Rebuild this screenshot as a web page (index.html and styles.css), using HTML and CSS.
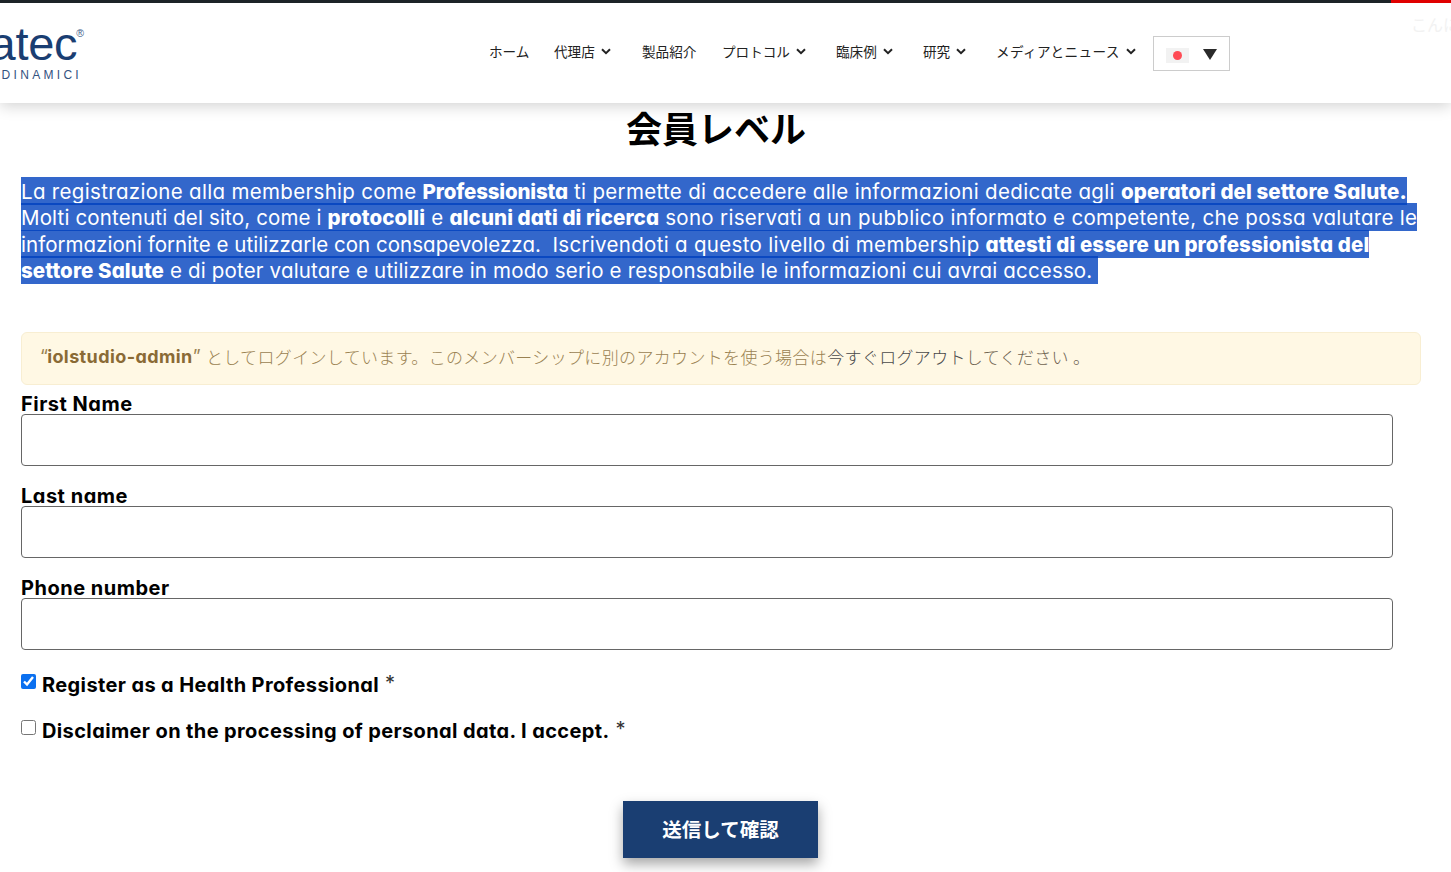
FILE: index.html
```html
<!DOCTYPE html>
<html lang="ja">
<head>
<meta charset="utf-8">
<title>会員レベル</title>
<link rel="stylesheet" href="styles.css">
</head>
<body>
<header class="site-header">
  <div class="top-bar"><span class="top-accent"></span></div>
  <div class="header-row">
    <a class="logo">
      <span class="logo-word">atec<sup class="logo-reg">®</sup></span>
      <span class="logo-sub">DINAMICI</span>
    </a>
    <nav class="nav">
      <a class="nav-item nav-home">ホーム</a>
      <a class="nav-item nav-agency">代理店<svg class="chev" viewBox="0 0 10 7"><path d="M1 1.3 5 5.2 9 1.3"/></svg></a>
      <a class="nav-item nav-products">製品紹介</a>
      <a class="nav-item nav-protocol">プロトコル<svg class="chev" viewBox="0 0 10 7"><path d="M1 1.3 5 5.2 9 1.3"/></svg></a>
      <a class="nav-item nav-cases">臨床例<svg class="chev" viewBox="0 0 10 7"><path d="M1 1.3 5 5.2 9 1.3"/></svg></a>
      <a class="nav-item nav-research">研究<svg class="chev" viewBox="0 0 10 7"><path d="M1 1.3 5 5.2 9 1.3"/></svg></a>
      <a class="nav-item nav-media">メディアとニュース<svg class="chev" viewBox="0 0 10 7"><path d="M1 1.3 5 5.2 9 1.3"/></svg></a>
    </nav>
    <div class="lang">
      <span class="flag"><span class="flag-dot"></span></span>
      <svg class="lang-arrow" viewBox="0 0 14 11"><path d="M0 0H14L7 11Z"/></svg>
    </div>
    <span class="greeting">こんにちは</span>
  </div>
</header>
<main class="content">
  <h1 class="title">会員レベル</h1>
  <p class="intro"><span class="selected"><span class="line-1">La registrazione alla membership come <b class="tight">Professionista</b> ti permette di accedere alle informazioni dedicate agli <b>operatori del settore Salute.</b> </span><br><span class="line-2"><span class="line-2-lead">Molti contenuti del sito, come i </span><b>protocolli</b> e <b>alcuni dati di ricerca</b> sono riservati a un pubblico informato e competente, che possa valutare le </span><br><span class="line-3"><span class="line-3-lead">informazioni fornite e utilizzarle con consapevolezza.&nbsp; </span>Iscrivendoti a questo livello di membership <b>attesti di essere un professionista del </b></span><br><span class="line-4"><b>settore Salute</b> e di poter valutare e utilizzare in modo serio e responsabile le informazioni cui avrai accesso.&nbsp;</span></span></p>
  <div class="notice"><span class="quote">“</span><b>iolstudio-admin</b><span class="quote quote-close">”</span> としてログインしています。このメンバーシップに別のアカウントを使う場合は<a class="notice-link">今すぐログアウト</a><span class="notice-end">してください 。</span></div>
  <form class="form">
    <div class="field"><label class="label">First Name</label><input class="input" type="text"></div>
    <div class="field"><label class="label">Last name</label><input class="input" type="text"></div>
    <div class="field"><label class="label">Phone number</label><input class="input" type="text"></div>
    <div class="check check-first"><input class="box" type="checkbox" checked><span class="check-text">Register as a Health Professional</span><span class="req">*</span></div>
    <div class="check check-second"><input class="box" type="checkbox"><span class="check-text">Disclaimer on the processing of personal data. I accept.</span><span class="req">*</span></div>
    <div class="actions"><button class="submit" type="button">送信して確認</button></div>
  </form>
</main>
</body>
</html>
```
FILE: styles.css
```css
* { box-sizing: border-box; }
html, body { height: 872px; overflow: hidden; }
body { margin: 0; background: #fff; color: #000; font-family: Inter, "Noto Sans CJK JP", sans-serif; font-feature-settings: "cv11"; }

.site-header { height: 103px; background: #fff; box-shadow: 0 3px 14px rgba(0,0,0,.18); position: relative; z-index: 2; }
.top-bar { height: 3px; background: #1d2327; display: flex; justify-content: flex-end; }
.top-accent { width: 60px; background: #e00000; }
.header-row { height: 100px; display: flex; align-items: flex-start; position: relative; }

.logo { width: 85px; height: 60px; margin-top: 19px; display: flex; flex-direction: column; align-items: flex-end; overflow: hidden; flex: none; }
.logo-word { font: 400 47px/44px "Liberation Sans", sans-serif; color: #1a3e72; letter-spacing: -.3px; white-space: nowrap; display: flex; }
.logo-reg { font-size: 10.5px; line-height: 12px; margin: 5px 1px 0 -1px; letter-spacing: 0; color: #3d5c8a; }
.logo-sub { font: 400 12px/14px "Liberation Sans", sans-serif; letter-spacing: 3.3px; color: #33527f; margin: 2px 3px 0 0; }

.nav { display: flex; margin-left: 404px; margin-top: 39px; font: 400 13.6px/18px "Noto Sans CJK JP", sans-serif; color: #222; flex: none; }
.nav-item { display: flex; align-items: center; white-space: nowrap; }
.nav-home { width: 65px; }
.nav-agency { width: 88px; }
.nav-products { width: 80px; }
.nav-protocol { width: 114px; }
.nav-cases { width: 87px; }
.nav-research { width: 73px; }
.nav-media { width: 157px; letter-spacing: .35px; }
.chev { width: 10px; height: 7px; margin-left: 6px; fill: none; stroke: #222; stroke-width: 2; }

.lang { width: 77px; height: 35px; margin-top: 33px; border: 1px solid #ccc; display: flex; align-items: center; padding-left: 12px; flex: none; }
.flag { width: 23px; height: 15px; background: #f2f2f2; display: flex; align-items: center; justify-content: center; margin-top: 3px; }
.flag-dot { width: 9px; height: 9px; border-radius: 50%; background: #ff4b55; }
.lang-arrow { width: 14px; height: 11px; margin-left: 14px; margin-top: 2px; fill: #2a2a2a; }
.greeting { position: absolute; left: 1411px; top: 12px; font: 400 16px/18px "Noto Sans CJK JP", sans-serif; color: #f2f2f2; white-space: nowrap; }

.content { padding: 0 30px 0 21px; }
.title { margin: 0; padding-right: 10px; text-align: center; font: 700 36px/48px "Noto Sans CJK JP", sans-serif; }
.intro { margin: 28px 0 0; font-size: 20.5px; line-height: 26.4px; white-space: nowrap; }
.selected { background: rgba(0,65,190,.8); color: #fff; padding: 2px 0 1px; }
.selected b { font-weight: 800; letter-spacing: .1px; }
.selected b.tight { letter-spacing: -.17px; }
.line-1 { letter-spacing: .32px; }
.line-2 { letter-spacing: .32px; }
.line-2-lead { letter-spacing: .15px; }
.line-3 { letter-spacing: .31px; }
.line-3-lead { letter-spacing: .03px; }
.line-4 { letter-spacing: .17px; }

.notice { margin-top: 47px; width: 1400px; height: 53px; padding: 0 18px 3px; display: flex; align-items: center; background: #fff8e4; border: 1px solid #f8eed2; border-radius: 6px; color: #9a8252; font-family: "Noto Sans CJK JP", sans-serif; font-weight: 300; font-size: 17px; letter-spacing: .34px; white-space: pre; }
.notice b { font-family: Inter, sans-serif; font-weight: 700; color: #8a6a35; font-size: 18px; letter-spacing: .4px; }
.quote { font-family: Inter, sans-serif; font-size: 18px; font-weight: 400; letter-spacing: -.8px; }
.quote-close { letter-spacing: 1.2px; }
.notice-link { color: #4a4a4a; }
.notice-end { color: #6e6350; }

.form { display: block; }
.field { margin-bottom: 20px; display: flex; flex-direction: column; align-items: flex-start; }
.field:first-child { margin-top: 9px; }
.label { font-size: 20px; line-height: 20px; font-weight: 700; letter-spacing: .5px; }
.input { width: 1372px; height: 52px; border: 1px solid #666; border-radius: 4px; background: #fff; margin: 0; }
.check { display: flex; align-items: flex-start; white-space: nowrap; }
.check-first { padding-top: 2px; height: 48px; }
.box { width: 15px; height: 15px; margin: 2px 6px 0 0; accent-color: #0b70f0; flex: none; }
.check-text { font-size: 20px; line-height: 26px; font-weight: 700; letter-spacing: .38px; }
.req { margin-left: 6px; font-size: 20px; line-height: 22px; color: #333; }
.actions { margin-top: 57px; display: flex; padding-left: 602px; }
.submit { width: 195px; height: 57px; border: 0; background: #1a3e72; color: #fff; font: 700 19.5px/1 "Noto Sans CJK JP", sans-serif; box-shadow: 0 6px 12px rgba(0,0,0,.35); }
```
